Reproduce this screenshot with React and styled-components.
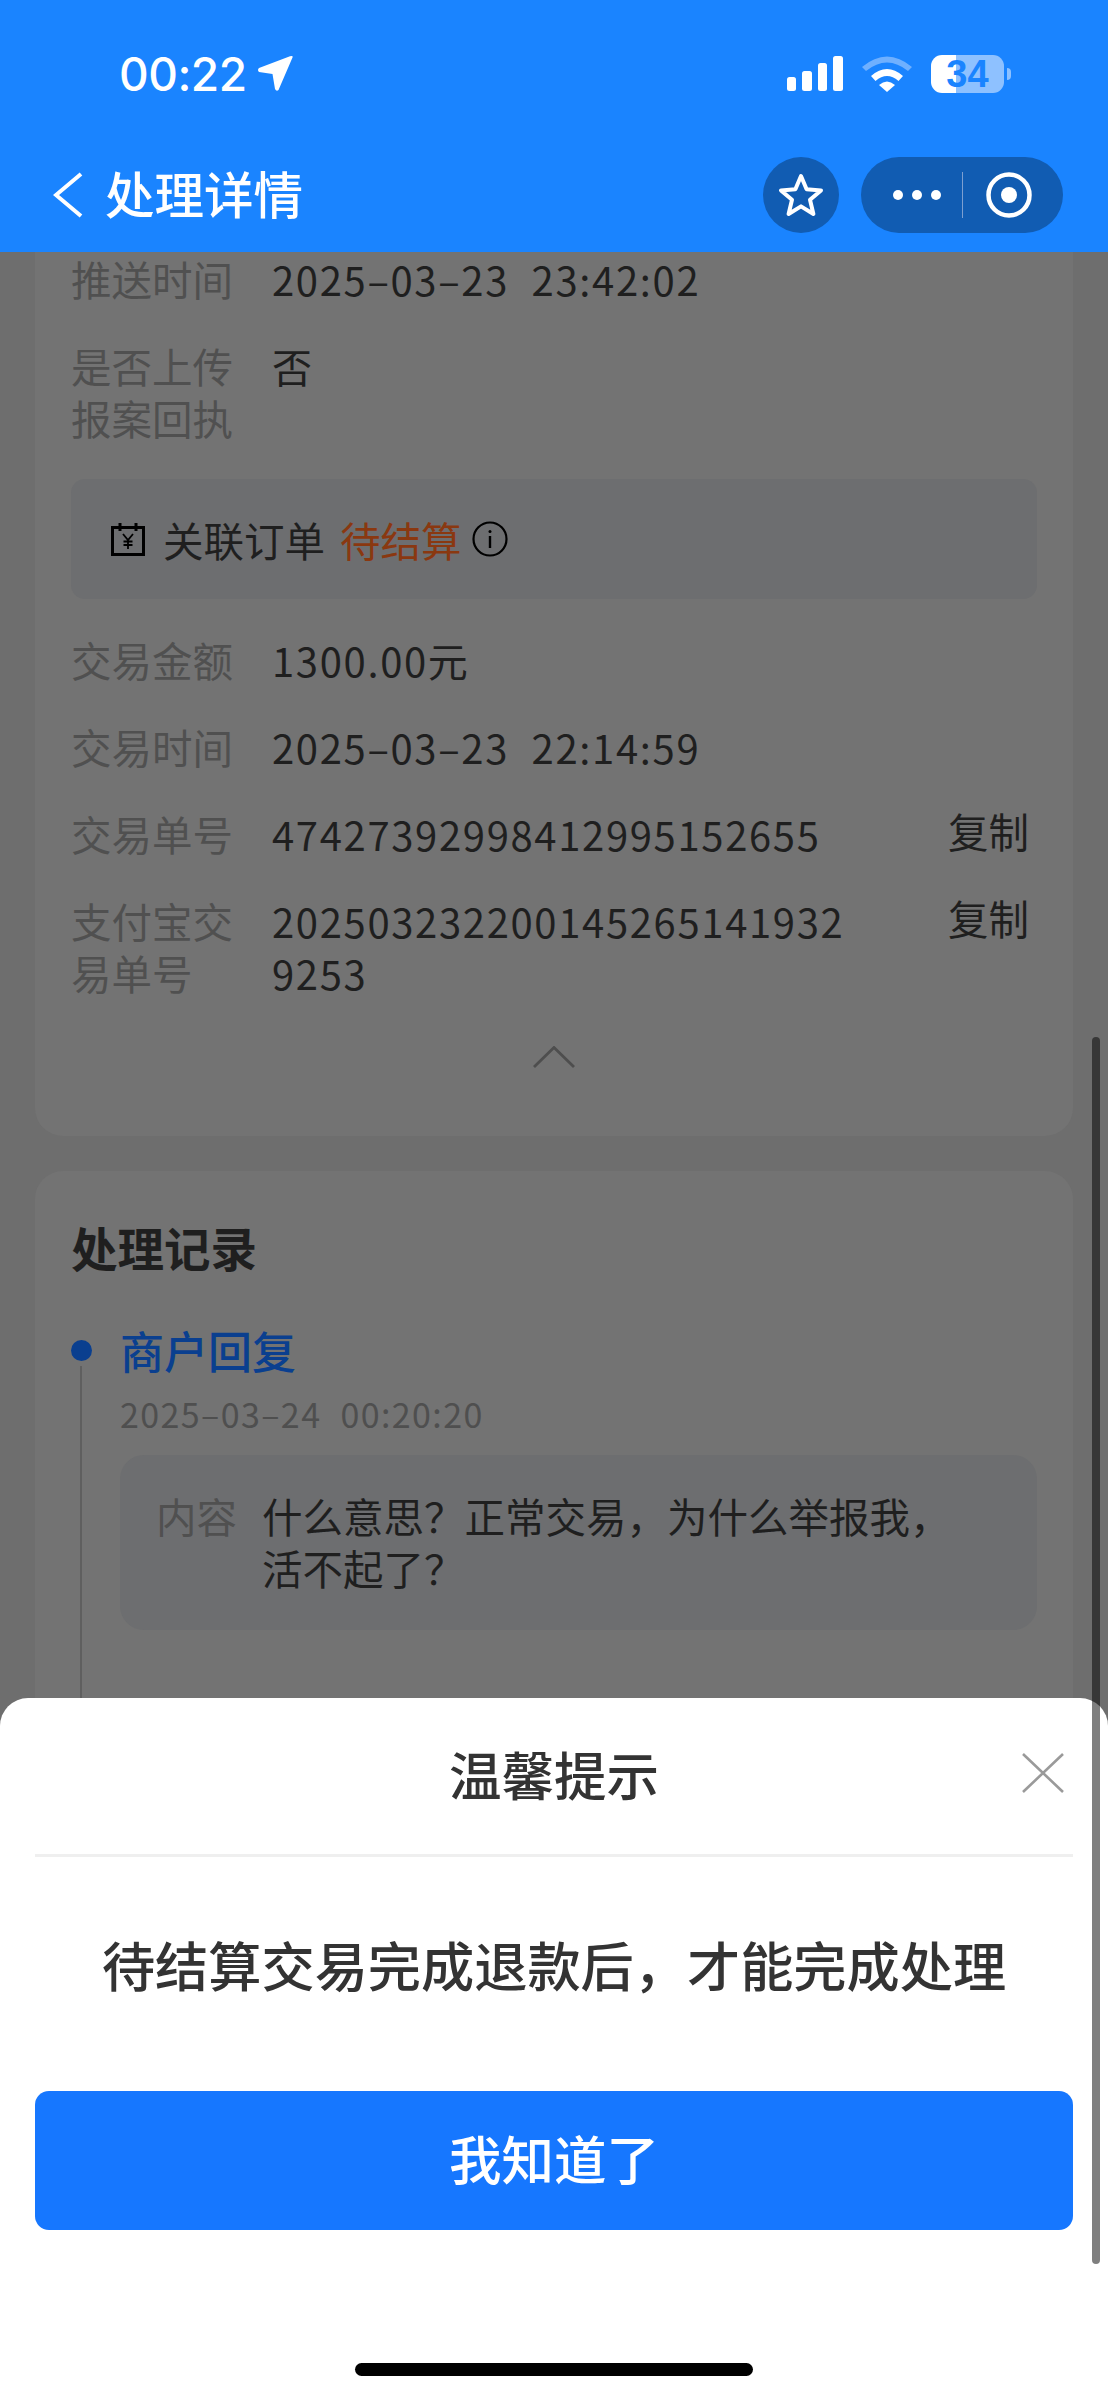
import React from 'react';
import styled, { createGlobalStyle } from 'styled-components';

const CJK = `"Noto Sans CJK SC", "Noto Sans", sans-serif`;

const GlobalStyle = createGlobalStyle`
  html, body {
    margin: 0;
    padding: 0;
    background: #6e6e6e;
  }
  * {
    box-sizing: border-box;
  }
`;

const Page = styled.div`
  position: relative;
  width: 1108px;
  height: 2400px;
  overflow: hidden;
  background: #6e6e6e;
  font-family: ${CJK};
`;

// 顶部导航
const Header = styled.header`
  height: 252px;
  padding-top: 55px;
  background: #1a84ff;
  color: #fff;
`;

const StatusBar = styled.div`
  display: flex;
  align-items: center;
  justify-content: space-between;
  height: 38px;
  padding: 0 97px 0 119px;
`;

const Clock = styled.div`
  display: flex;
  align-items: center;
  gap: 10px;
  font-family: Inter, sans-serif;
  font-size: 46px;
  font-weight: 500;
  letter-spacing: -0.5px;
  line-height: 38px;
`;

const StatusIcons = styled.div`
  display: flex;
  align-items: center;
`;

const Battery = styled.div`
  display: flex;
  align-items: center;
  justify-content: center;
  width: 73px;
  height: 38px;
  margin-left: 19px;
  border-radius: 11px;
  background: linear-gradient(90deg, #fff 34%, #8ec1ff 34%);
  color: #1a84ff;
  font-family: "Liberation Sans", sans-serif;
  font-size: 38px;
  font-weight: 700;
`;

const BatteryCap = styled.div`
  width: 4px;
  height: 12px;
  margin-left: 3px;
  border-radius: 0 4px 4px 0;
  background: #8ec1ff;
`;

const NavBar = styled.div`
  display: flex;
  align-items: center;
  height: 76px;
  margin-top: 64px;
  padding: 0 45px 0 53px;
`;

const NavTitle = styled.div`
  flex: 1;
  margin: -5px 0 0 22px;
  font-size: 49.5px;
  font-weight: 500;
  line-height: 76px;
`;

const RoundButton = styled.div`
  display: flex;
  align-items: center;
  justify-content: center;
  width: 76px;
  height: 76px;
  margin-right: 22px;
  border-radius: 50%;
  background: #115cb2;
`;

const Capsule = styled.div`
  display: flex;
  align-items: center;
  width: 202px;
  height: 76px;
  padding-left: 32px;
  border-radius: 38px;
  background: #115cb2;
`;

const Dots = styled.div`
  display: flex;
  gap: 9px;
  width: 69px;
`;

const Dot = styled.span`
  width: 10px;
  height: 10px;
  border-radius: 50%;
  background: #fff;
`;

const CapsuleLine = styled.div`
  width: 1px;
  height: 46px;
  background: #7d9fd0;
`;

const TargetWrap = styled.div`
  display: flex;
  margin-left: 23px;
`;

// 内容区
const Content = styled.main`
  display: flex;
  flex-direction: column;
  gap: 35px;
  padding: 0 35px;
`;

const Card = styled.section`
  display: flex;
  flex-direction: column;
  padding: 0 36px;
  background: #737373;
  border-radius: ${(p) => (p.$cutTop ? '0 0 28px 28px' : '28px')};
`;

const InfoList = styled.div`
  display: flex;
  flex-direction: column;
  gap: 35px;
  padding-top: 1px;
`;

const Row = styled.div`
  display: flex;
  font-size: 40.5px;
  line-height: 52px;
`;

const Label = styled.div`
  flex: none;
  width: 201px;
  padding-right: 30px;
  color: #505050;
`;

const Value = styled.div`
  flex: 1;
  padding-right: 90px;
  color: #1f1f1f;
  font-size: 40px;
  letter-spacing: 1.65px;
  word-spacing: 12px;
  word-break: break-word;
  overflow-wrap: anywhere;
`;

const CopyLink = styled.div`
  flex: none;
  margin: -3px 8px 0 0;
  color: #1f1f1f;
`;

const OrderBox = styled.div`
  display: flex;
  align-items: center;
  height: 120px;
  padding-left: 40px;
  border-radius: 14px;
  background: #6d6e70;
  font-size: 40.5px;
`;

const OrderText = styled.span`
  margin-left: 18px;
  color: #1f1f1f;
`;

const OrderStatus = styled.span`
  margin: 0 10px 0 15px;
  color: #8a3810;
`;

const Collapse = styled.div`
  display: flex;
  justify-content: center;
  margin: 47px 0 68px;
`;

const SectionTitle = styled.h2`
  margin: 46px 0 0;
  color: #1f1f1f;
  font-size: 46.5px;
  font-weight: 700;
  line-height: 60px;
`;

const Timeline = styled.div`
  display: flex;
  gap: 27px;
  margin-top: 43px;
`;

const Marker = styled.div`
  display: flex;
  flex: none;
  flex-direction: column;
  gap: 5px;
  width: 22px;
  padding-top: 20px;
`;

const MarkerDot = styled.div`
  width: 21px;
  height: 21px;
  border-radius: 50%;
  background: #0a3f8f;
`;

const MarkerLine = styled.div`
  flex: 1;
  width: 2px;
  margin-left: 9px;
  background: #5f5f5f;
`;

const TimelineBody = styled.div`
  flex: 1;
  padding-bottom: 200px;
`;

const ItemTitle = styled.div`
  color: #0a3f8f;
  font-size: 44px;
  font-weight: 500;
  line-height: 60px;
`;

const ItemDate = styled.div`
  margin-top: 12px;
  color: #4f4f4f;
  font-size: 34px;
  letter-spacing: 1.4px;
  word-spacing: 10px;
  line-height: 44px;
`;

const ReplyBox = styled.div`
  display: flex;
  gap: 25px;
  margin-top: 19px;
  padding: 35px 60px 36px 36px;
  border-radius: 24px;
  background: #6d6e70;
  font-size: 40.5px;
  line-height: 52px;
`;

const ReplyLabel = styled.div`
  flex: none;
  color: #505050;
`;

const ReplyText = styled.div`
  color: #1f1f1f;
`;

const ScrollThumb = styled.div`
  position: absolute;
  top: 1037px;
  left: 1092px;
  z-index: 3;
  width: 8px;
  height: 1227px;
  border-radius: 4px;
  background: rgba(0, 0, 0, 0.5);
`;

// 弹层
const Sheet = styled.div`
  position: absolute;
  top: 1698px;
  right: 0;
  left: 0;
  z-index: 2;
  height: 702px;
  padding: 0 35px;
  border-radius: 28px 28px 0 0;
  background: #fff;
`;

const SheetHead = styled.div`
  display: grid;
  grid-template-columns: 1fr auto 1fr;
  align-items: center;
  height: 159px;
  padding-bottom: 6px;
  border-bottom: 3px solid #efefef;
`;

const SheetTitle = styled.div`
  color: #333;
  font-size: 52.5px;
  font-weight: 500;
`;

const CloseIcon = styled.svg`
  justify-self: end;
  margin-right: 9px;
`;

const SheetMessage = styled.div`
  margin-top: 71px;
  color: #333;
  font-size: 53.2px;
  font-weight: 500;
  line-height: 72px;
  text-align: center;
`;

const PrimaryButton = styled.button`
  display: block;
  width: 100%;
  height: 139px;
  margin-top: 91px;
  padding: 0 0 8px;
  border: 0;
  border-radius: 14px;
  background: #1677ff;
  color: #fff;
  font-family: ${CJK};
  font-size: 52.5px;
  font-weight: 500;
`;

const HomeIndicator = styled.div`
  width: 398px;
  height: 13px;
  margin: 133px auto 0;
  border-radius: 7px;
  background: #000;
`;

const infoRows = [
  { label: '交易金额', value: '1300.00元' },
  { label: '交易时间', value: '2025–03–23 22:14:59' },
  { label: '交易单号', value: '47427392998412995152655', copy: true },
  { label: '支付宝交易单号', value: '2025032322001452651419329253', copy: true },
];

function LocationArrow() {
  return (
    <svg width="37" height="36" viewBox="0 0 37 36">
      <path d="M35.5 1.5 L21.5 34 Q19.5 36 18 33 L15.5 18 L2 16 Q0 14 2 12 L33 0.3 Q36.5 -0.5 35.5 1.5 Z" fill="#fff" />
    </svg>
  );
}

function SignalIcon() {
  return (
    <svg width="56" height="36" viewBox="0 0 56 36" fill="#fff">
      <rect x="0" y="21" width="9" height="14" rx="2.5" />
      <rect x="15" y="15" width="10" height="20" rx="2.5" />
      <rect x="31" y="7" width="9" height="28" rx="2.5" />
      <rect x="46" y="0" width="10" height="35" rx="2.5" />
    </svg>
  );
}

function WifiIcon() {
  return (
    <svg width="50" height="36" viewBox="0 0 50 36" style={{ marginLeft: 19 }}>
      <path d="M0 11 Q25 -10 50 11 L46 15 Q25 -2 4 15 Z" fill="#6fb0ff" />
      <path d="M9 20 Q25 6 41 20 L36.5 25 Q25 15 13.5 25 Z" fill="#fff" />
      <path d="M17 29 Q25 22 33 29 L25 36 Z" fill="#fff" />
    </svg>
  );
}

function BackIcon() {
  return (
    <svg width="30" height="46" viewBox="0 0 30 46">
      <polyline points="28,2 3,23 28,44" fill="none" stroke="#fff" strokeWidth="4" />
    </svg>
  );
}

function StarIcon() {
  return (
    <svg width="46" height="44" viewBox="0 0 46 44">
      <path
        d="M23 3 L28.6 16.2 L43 17.4 L32 26.8 L35.4 41 L23 33.4 L10.6 41 L14 26.8 L3 17.4 L17.4 16.2 Z"
        fill="none"
        stroke="#fff"
        strokeWidth="4"
        strokeLinejoin="round"
      />
    </svg>
  );
}

function TargetIcon() {
  return (
    <svg width="46" height="46" viewBox="0 0 46 46">
      <circle cx="23" cy="23" r="20.5" fill="none" stroke="#fff" strokeWidth="4.5" />
      <circle cx="23" cy="23" r="8" fill="#fff" />
    </svg>
  );
}

function OrderIcon() {
  return (
    <svg width="34" height="34" viewBox="0 0 34 34" fill="none" stroke="#000">
      <path d="M1.5 5.5 H32.5 V32.5 H1.5 Z" strokeWidth="3" />
      <path d="M9 1 V9 M25 1 V9" strokeWidth="3" />
      <path d="M12 12 L17 18 L22 12 M17 18 V27 M12.5 19.5 H21.5 M12.5 23 H21.5" strokeWidth="1.8" />
    </svg>
  );
}

function InfoIcon() {
  return (
    <svg width="36" height="36" viewBox="0 0 36 36" fill="none" stroke="#000">
      <circle cx="18" cy="18" r="16.5" strokeWidth="2.2" />
      <path d="M18 15 V27" strokeWidth="2.4" />
      <circle cx="18" cy="10.5" r="1.5" fill="#000" stroke="none" />
    </svg>
  );
}

function ChevronUp() {
  return (
    <svg width="42" height="22" viewBox="0 0 42 22">
      <polyline points="1,21 21,1.5 41,21" fill="none" stroke="#4e4e4e" strokeWidth="2.8" />
    </svg>
  );
}

export default function App() {
  return (
    <Page>
      <GlobalStyle />
      <Header>
        <StatusBar>
          <Clock>
            00:22
            <LocationArrow />
          </Clock>
          <StatusIcons>
            <SignalIcon />
            <WifiIcon />
            <Battery>34</Battery>
            <BatteryCap />
          </StatusIcons>
        </StatusBar>
        <NavBar>
          <BackIcon />
          <NavTitle>处理详情</NavTitle>
          <RoundButton>
            <StarIcon />
          </RoundButton>
          <Capsule>
            <Dots>
              <Dot />
              <Dot />
              <Dot />
            </Dots>
            <CapsuleLine />
            <TargetWrap>
              <TargetIcon />
            </TargetWrap>
          </Capsule>
        </NavBar>
      </Header>

      <Content>
        <Card $cutTop>
          <InfoList>
            <Row>
              <Label>推送时间</Label>
              <Value>2025–03–23 23:42:02</Value>
            </Row>
            <Row>
              <Label>是否上传报案回执</Label>
              <Value>否</Value>
            </Row>
            <OrderBox>
              <OrderIcon />
              <OrderText>关联订单</OrderText>
              <OrderStatus>待结算</OrderStatus>
              <InfoIcon />
            </OrderBox>
            {infoRows.map((row) => (
              <Row key={row.label}>
                <Label>{row.label}</Label>
                <Value>{row.value}</Value>
                {row.copy && <CopyLink>复制</CopyLink>}
              </Row>
            ))}
          </InfoList>
          <Collapse>
            <ChevronUp />
          </Collapse>
        </Card>

        <Card>
          <SectionTitle>处理记录</SectionTitle>
          <Timeline>
            <Marker>
              <MarkerDot />
              <MarkerLine />
            </Marker>
            <TimelineBody>
              <ItemTitle>商户回复</ItemTitle>
              <ItemDate>2025–03–24 00:20:20</ItemDate>
              <ReplyBox>
                <ReplyLabel>内容</ReplyLabel>
                <ReplyText>什么意思？正常交易，为什么举报我，活不起了？</ReplyText>
              </ReplyBox>
            </TimelineBody>
          </Timeline>
        </Card>
      </Content>

      <Sheet>
        <SheetHead>
          <span />
          <SheetTitle>温馨提示</SheetTitle>
          <CloseIcon width="42" height="40" viewBox="0 0 42 40">
            <path d="M1 1 L41 39 M41 1 L1 39" stroke="#9a9a9a" strokeWidth="2.6" fill="none" />
          </CloseIcon>
        </SheetHead>
        <SheetMessage>待结算交易完成退款后，才能完成处理</SheetMessage>
        <PrimaryButton>我知道了</PrimaryButton>
        <HomeIndicator />
      </Sheet>
      <ScrollThumb />
    </Page>
  );
}
